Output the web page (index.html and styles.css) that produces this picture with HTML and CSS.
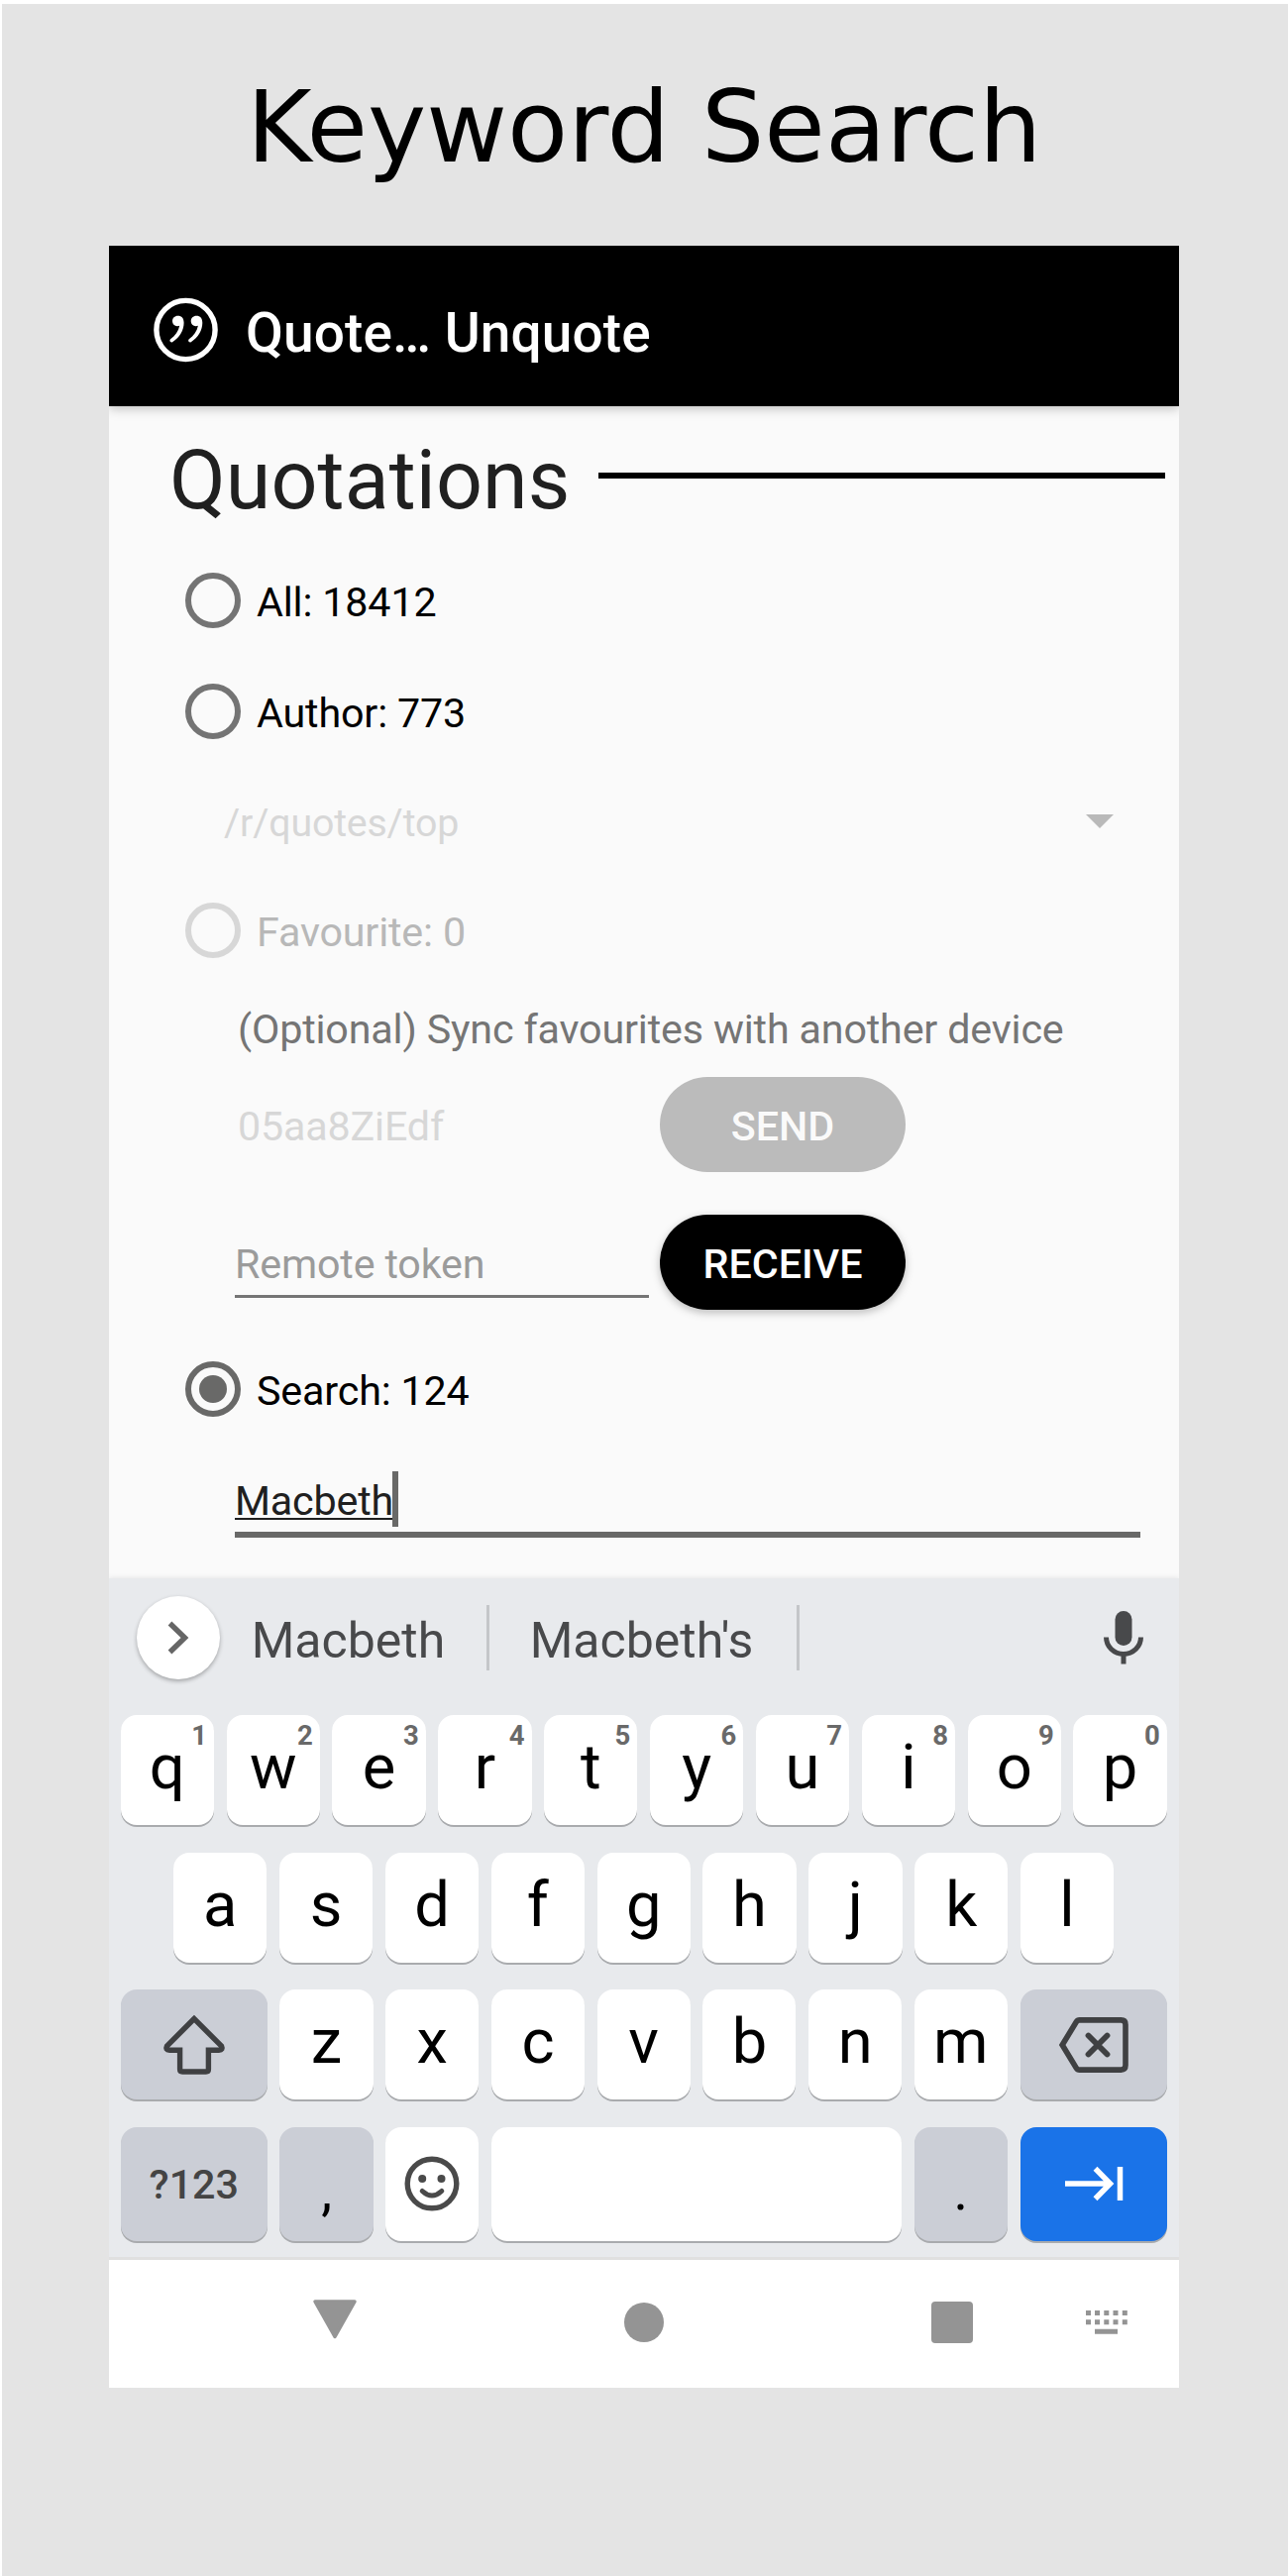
FILE: index.html
```html
<!DOCTYPE html>
<html lang="en">
<head>
<meta charset="utf-8">
<title>Keyword Search</title>
<link rel="stylesheet" href="styles.css">
</head>
<body>
<div class="page">
  <h1 class="caption">Keyword Search</h1>
  <main class="phone">
    <header class="appbar">
      <svg class="logo" viewBox="0 0 66 66" width="66" height="66">
        <circle cx="32.500" cy="33" r="29.600" fill="none" stroke="#fff" stroke-width="5.400"/>
        <g fill="#fff">
          <path d="M24.500 18.800c-3.200 0-5.500 2.300-5.500 5.200 0 3 2.200 5.200 5 5.200.9 0 1.600-.2 2.200-.5-1.100 5.500-4.300 10.200-9.100 13.600-1.600 1.100 0 4.100 2 2.900 7.400-4.600 11.500-12 11.500-19.400 0-4.400-2.200-7-6.100-7z"/>
          <path d="M43.200 18.800c-3.200 0-5.500 2.300-5.500 5.200 0 3 2.200 5.200 5 5.200.9 0 1.600-.2 2.200-.5-1.100 5.500-4.300 10.200-9.100 13.600-1.600 1.100 0 4.100 2 2.900 7.400-4.600 11.500-12 11.500-19.400 0-4.400-2.200-7-6.100-7z"/>
        </g>
      </svg>
      <span class="app-name">Quote… Unquote</span>
    </header>

    <section class="settings">
      <div class="section-title"><h2>Quotations</h2><span class="rule"></span></div>
      <label class="option"><span class="radio"></span><span class="text">All: 18412</span></label>
      <label class="option"><span class="radio"></span><span class="text">Author: 773</span></label>
      <div class="spinner">
        <span>/r/quotes/top</span>
        <svg width="28" height="14" viewBox="0 0 28 14"><path d="M0 0h28L14 14z" fill="#b9b9b9"/></svg>
      </div>
      <label class="option disabled"><span class="radio"></span><span class="text">Favourite: 0</span></label>
      <div class="note">(Optional) Sync favourites with another device</div>
      <div class="sync send"><span class="token">05aa8ZiEdf</span><span class="button off">SEND</span></div>
      <div class="sync receive"><span class="remote">Remote token</span><span class="button">RECEIVE</span></div>
      <label class="option search"><span class="radio on"></span><span class="text">Search: 124</span></label>
      <div class="query"><div class="field"><span class="typed">Macbeth</span><span class="cursor"></span></div></div>
    </section>

    <section class="keyboard">
      <div class="suggestions">
        <span class="expand"><svg width="84" height="84" viewBox="0 0 84 84"><path d="M33.500 27.500L48.500 42 33.500 56.500" fill="none" stroke="#666" stroke-width="5.400"/></svg></span>
        <span class="word first">Macbeth</span>
        <span class="bar"></span>
        <span class="word second">Macbeth's</span>
        <span class="bar"></span>
        <svg class="mic" width="40" height="54" viewBox="0 0 40 54"><rect x="11.500" y="0" width="17" height="35" rx="8.500" fill="#48494b"/><path d="M2.500 26.500a17.500 17 0 0 0 35 0M20 43v10.500" fill="none" stroke="#48494b" stroke-width="5"/></svg>
      </div>
      <div class="keys">
        <span class="key">q<sup>1</sup></span><span class="key">w<sup>2</sup></span><span class="key">e<sup>3</sup></span><span class="key">r<sup>4</sup></span><span class="key">t<sup>5</sup></span><span class="key">y<sup>6</sup></span><span class="key">u<sup>7</sup></span><span class="key">i<sup>8</sup></span><span class="key">o<sup>9</sup></span><span class="key">p<sup>0</sup></span>
      </div>
      <div class="keys middle">
        <span class="key">a</span><span class="key">s</span><span class="key">d</span><span class="key">f</span><span class="key">g</span><span class="key">h</span><span class="key">j</span><span class="key">k</span><span class="key">l</span>
      </div>
      <div class="keys">
        <span class="key wide gray"><svg width="66" height="62" viewBox="0 0 66 62"><path d="M33 4.500L5.500 32Q3.500 36.200 8 36.200H18.600V55.500Q18.600 58 21.100 58H44.900Q47.400 58 47.400 55.500V36.200H58Q62.500 36.200 60.500 32Z" fill="none" stroke="#3f4042" stroke-width="5.400"/></svg></span>
        <span class="key">z</span><span class="key">x</span><span class="key">c</span><span class="key">v</span><span class="key">b</span><span class="key">n</span><span class="key">m</span>
        <span class="key wide gray"><svg width="70" height="56" viewBox="0 0 70 56"><path d="M20.500 2.900H62.500Q67 2.900 67 7.400V48.600Q67 53.100 62.500 53.100H20.500Q18.500 53.100 17.300 51.200L3.200 28 17.300 4.800Q18.500 2.900 20.500 2.900Z" fill="none" stroke="#3f4042" stroke-width="5.600"/><path d="M29.500 18.500L48.500 37.500M48.500 18.500L29.500 37.500" stroke="#3f4042" stroke-width="5.800" stroke-linecap="round"/></svg></span>
      </div>
      <div class="keys bottom">
        <span class="key wide gray mode">?123</span>
        <span class="key gray punct">,</span>
        <span class="key"><svg width="56" height="56" viewBox="0 0 56 56"><circle cx="28" cy="28" r="24.800" fill="none" stroke="#4a4a4a" stroke-width="5.400"/><circle cx="18.200" cy="23" r="4" fill="#4a4a4a"/><circle cx="37.500" cy="23" r="4" fill="#4a4a4a"/><path d="M18.200 35.500Q28 44.500 37.800 35.500" fill="none" stroke="#4a4a4a" stroke-width="5" stroke-linecap="round"/></svg></span>
        <span class="key space"></span>
        <span class="key gray punct">.</span>
        <span class="key wide enter"><svg width="60" height="36" viewBox="0 0 60 36"><path d="M1 18H46M31.500 2.800L46.500 18 31.500 33.200M56.500 1V35" fill="none" stroke="#fff" stroke-width="5.500"/></svg></span>
      </div>
    </section>

    <nav class="navbar">
      <svg width="46" height="40" viewBox="0 0 46 40"><path d="M3 2H43L23 37.500Z" fill="#949494" stroke="#949494" stroke-width="3.500" stroke-linejoin="round"/></svg>
      <span class="home"></span>
      <span class="recent"></span>
      <svg width="42" height="24" viewBox="0 0 42 24"><path d="M0 2.500H5M9 2.500H14M18.300 2.500H23.300M27.500 2.500H32.500M36.800 2.500H41.800M0 11.800H5M9 11.800H14M18.300 11.800H23.300M27.500 11.800H32.500M36.800 11.800H41.800M9 21.300H32" stroke="#949494" stroke-width="5"/></svg>
    </nav>
  </main>
</div>
</body>
</html>
```
FILE: styles.css
```css
* { box-sizing: border-box; }
body { margin: 0; background: #fff; }
svg { display: block; flex: none; }
.page {
  width: 1300px;
  height: 2600px;
  border-top: 4px solid #fff;
  border-left: 2px solid #fff;
  background: #e4e4e4;
  overflow: hidden;
}
.caption {
  margin: 0;
  height: 244px;
  padding: 67px 0 0 247px;
  font: 400 100px/116px "DejaVu Sans", sans-serif;
  white-space: nowrap;
  color: #000;
}
.phone {
  width: 1080px;
  height: 2162px;
  margin-left: 108px;
  display: flex;
  flex-direction: column;
  background: #fafafa;
  font-family: Roboto, sans-serif;
  font-size: 41.25px;
  letter-spacing: -.17px;
  line-height: 50px;
  white-space: nowrap;
}
.appbar {
  height: 162px;
  padding: 8px 0 0 44.500px;
  display: flex;
  align-items: center;
  gap: 27.500px;
  background: #000;
  color: #fff;
  box-shadow: 0 2px 11px rgba(0, 0, 0, .25);
  clip-path: inset(0 0 -20px 0);
}
.app-name {
  padding-top: 6px;
  font-size: 55px;
  font-weight: 500;
  line-height: 60px;
  letter-spacing: .1px;
}
.settings { height: 1183px; display: flex; flex-direction: column; }
.section-title {
  height: 140px;
  padding: 0 14px 0 61px;
  display: flex;
  align-items: center;
  gap: 29px;
}
.section-title h2 {
  margin: 0;
  padding-top: 9px;
  font-size: 82.500px;
  line-height: 96px;
  font-weight: 400;
  letter-spacing: .1px;
  color: #202020;
}
.rule { flex: 1; height: 6px; background: #000; }
.option {
  height: 112px;
  padding-left: 77px;
  display: flex;
  align-items: center;
  gap: 16px;
  color: #000;
}
.option .text { padding-top: 3px; }
.radio {
  width: 56px;
  height: 56px;
  border: 6px solid #747474;
  border-radius: 50%;
}
.disabled { height: 110px; color: #b8b8b8; }
.disabled .radio { border-color: #d7d7d7; }
.radio.on { border-color: #696968; display: grid; place-items: center; }
.radio.on::after {
  content: "";
  width: 28px;
  height: 28px;
  border-radius: 50%;
  background: #696968;
}
.spinner {
  height: 110px;
  padding: 0 66px 0 116px;
  display: flex;
  align-items: center;
  justify-content: space-between;
  color: #d7d7d7;
}
.spinner span { padding-top: 3px; font-size: 39.300px; }
.note { height: 89px; padding: 20px 0 0 130px; color: #757575; }
.sync { height: 104px; display: flex; align-items: center; }
.token { width: 556px; padding: 3px 0 0 130px; color: #d7d7d7; }
.receive { height: 174px; }
.remote {
  width: 418px;
  height: 70px;
  margin: 2px 11px 0 127px;
  padding-top: 11px;
  border-bottom: 3px solid #757575;
  color: #9b9b9b;
}
.button {
  width: 248px;
  height: 96px;
  border-radius: 48px;
  padding-top: 3px;
  display: grid;
  place-items: center;
  background: #000;
  color: #fff;
  font-weight: 500;
  letter-spacing: 0;
  box-shadow: 0 3px 8px rgba(0, 0, 0, .25);
}
.button.off { background: #bbb; color: #fafafa; box-shadow: none; }
.search { height: 82px; }
.query { height: 150px; padding: 42px 39px 0 127px; }
.field {
  height: 67px;
  border-bottom: 6px solid #696968;
  display: flex;
  align-items: flex-start;
  color: #202020;
}
.typed { width: 159px; margin-top: 5px; height: 44px; border-bottom: 2px solid #202020; }
.cursor { width: 6px; height: 56px; background: #696968; }

.keyboard {
  height: 688px;
  padding: 0 12.300px 0 11.700px;
  background: #e8eaed;
  border-bottom: 3px solid #e0e0e0;
  box-shadow: 0 -1px 5px rgba(0, 0, 0, .08);
  clip-path: inset(-10px 0 0 0);
  letter-spacing: 0;
}
.suggestions {
  height: 138px;
  padding: 0 24px 18px 16px;
  display: flex;
  align-items: center;
  color: #48494b;
  font-size: 50px;
  line-height: 60px;
}
.expand {
  width: 84px;
  height: 84px;
  border-radius: 50%;
  background: #fff;
  box-shadow: 0 2px 4px rgba(0, 0, 0, .3);
}
.word { padding-top: 5px; }
.first { width: 269px; padding-left: 32px; }
.second { width: 310px; padding-left: 41px; }
.bar { width: 3px; height: 66px; background: #c4c6c9; }
.mic { margin-left: auto; }
.keys {
  height: 111px;
  margin-bottom: 27.500px;
  display: flex;
  gap: 12.600px;
}
.keys.middle { padding: 0 53.500px; }
.key {
  position: relative;
  flex: 1;
  height: 100%;
  border-radius: 16px;
  display: grid;
  place-items: center;
  background: #fff;
  color: #000;
  font-size: 63.250px;
  line-height: 98px;
  align-content: start;
  padding-top: 3px;
  box-shadow: 0 2px 0 #a9abae;
}
.key:has(svg), .key.mode, .key.punct { align-content: center; padding-top: 0; }
.key sup {
  position: absolute;
  top: 5px;
  right: 7px;
  font-size: 27.500px;
  line-height: 32px;
  font-weight: 700;
  color: #696969;
}
.wide { flex: none; width: 148.200px; }
.gray { background: #cbced6; }
.bottom { height: 115px; margin-bottom: 0; }
.bottom .key:not(.space) { flex: none; }
.bottom .key:not(.wide):not(.space) { width: 94.200px; }
.key.mode { font-size: 41.250px; font-weight: 500; color: #444; padding-top: 2px; }
.key.punct { font-size: 55px; padding-top: 13px; }
.enter { background: #1a73e8; }
.navbar {
  height: 129px;
  padding: 0 52px 3px 205px;
  display: flex;
  align-items: center;
  background: #fff;
}
.navbar svg:first-child { margin-top: -6px; }
.home { width: 40px; height: 40px; margin-left: 269px; border-radius: 50%; background: #949494; }
.recent { width: 42px; height: 42px; margin-left: 270px; border-radius: 4px; background: #949494; }
.navbar svg:last-child { margin-left: auto; }
```
